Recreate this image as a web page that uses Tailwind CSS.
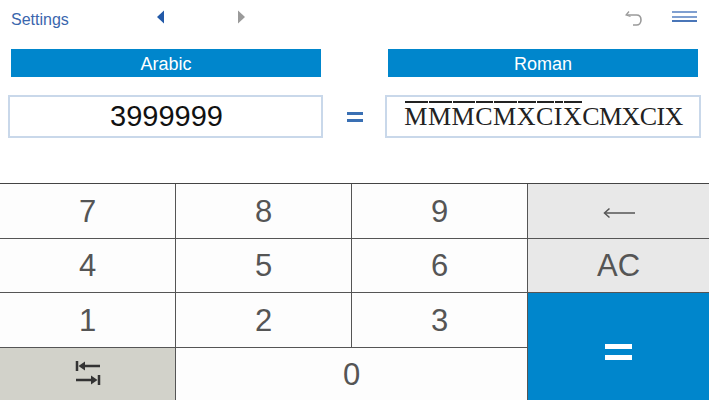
<!DOCTYPE html>
<html lang="en">
<head>
  <meta charset="UTF-8" />
  <title>Roman Numerals</title>
  <script src="https://cdn.jsdelivr.net/npm/@tailwindcss/browser@4"></script>
</head>
<body class="bg-white font-['Liberation_Sans',sans-serif] w-[709px] h-[400px] overflow-hidden flex flex-col">

  <!-- Toolbar -->
  <div class="h-[49px] flex shrink-0 text-[#3a66ad]">
    <div class="w-[156px] pl-[11px] pt-[11px] text-[16px] leading-[17px]">Settings</div>
    <div class="w-[90px] pt-[10px] flex justify-between">
      <svg class="w-[9px] h-[14px]" viewBox="0 0 9 14"><path d="M8 0.5V13.5L1 7Z" fill="#2259a8"/></svg>
      <svg class="w-[9px] h-[14px]" viewBox="0 0 9 14"><path d="M1 0.5V13.5L8 7Z" fill="#9a9a9a"/></svg>
    </div>
    <div class="ml-auto flex pr-[12px] pt-[9px] gap-[27px]">
      <svg class="w-[20px] h-[18px]" viewBox="0 0 20 18" fill="none"><path d="M4 2.500L1 6L5.500 7.500" stroke="#9a9a9a" stroke-width="1.300"/><path d="M2 6H11.500C14.500 6 16 8 16 11C16 14 14 16 11.500 16H8" stroke="#9a9a9a" stroke-width="1.600"/></svg>
      <div class="w-[25px] h-[11px] mt-[2px] flex flex-col justify-between">
        <div class="h-[2px] bg-[#7f9fd0]"></div>
        <div class="h-[2px] bg-[#7f9fd0]"></div>
        <div class="h-[2px] bg-[#4a76b8]"></div>
      </div>
    </div>
  </div>

  <!-- Headings -->
  <div class="flex justify-between px-[11px] h-[28px] shrink-0">
    <div class="w-[310px] bg-[#0086cc] text-white text-[18px] pt-[2px] flex items-center justify-center">Arabic</div>
    <div class="w-[310px] bg-[#0086cc] text-white text-[18px] pt-[2px] flex items-center justify-center">Roman</div>
  </div>

  <!-- Values -->
  <div class="flex justify-between items-center px-[8px] mt-[18px] h-[43px] shrink-0">
    <div class="w-[315px] h-[43px] border-2 border-[#c9d8ea] flex items-center justify-center text-[29px] text-[#111] pl-[2px]">3999999</div>
    <svg class="w-[16px] h-[10px] ml-[1px]" viewBox="0 0 16 10"><path d="M0 0H16V3H0ZM0 7H16V10H0Z" fill="#3a70b4"/></svg>
    <div class="w-[316px] h-[43px] border-2 border-[#c9d8ea] flex items-center justify-center font-['Liberation_Serif',serif] text-[26px] text-[#222] pl-[1px]">
      <span class="tracking-[0.5px] [&>span]:relative [&>span]:before:absolute [&>span]:before:left-[1px] [&>span]:before:right-0 [&>span]:before:-top-[1px] [&>span]:before:h-[2px] [&>span]:before:bg-[#222]"><span>M</span><span>M</span><span>M</span><span>C</span><span>M</span><span>X</span><span>C</span><span>I</span><span>X</span></span><span class="tracking-[-0.6px]">CMXCIX</span>
    </div>
  </div>

  <!-- Keypad -->
  <div class="h-[217px] mt-[45px] grid grid-cols-[176px_176px_176px_181px] grid-rows-[55px_54px_55px_54px] border-t border-[#444] text-[31px] text-[#555] shrink-0">
    <div class="bg-[#fdfdfd] border-r border-b border-[#555] pt-[2px] flex items-center justify-center">7</div>
    <div class="bg-[#fdfdfd] border-r border-b border-[#555] pt-[2px] flex items-center justify-center">8</div>
    <div class="bg-[#fdfdfd] border-r border-b border-[#555] pt-[2px] flex items-center justify-center">9</div>
    <div class="bg-[#e8e8e8] border-b border-[#555] flex items-center justify-center pt-[3px]">
      <svg class="w-[32px] h-[14px]" viewBox="0 0 32 14" fill="none"><path d="M2 7H32" stroke="#555" stroke-width="1.500"/><path d="M6.500 2.500L1.500 7L6.500 11.500" stroke="#555" stroke-width="1.500"/></svg>
    </div>
    <div class="bg-[#fdfdfd] border-r border-b border-[#555] pt-[2px] flex items-center justify-center">4</div>
    <div class="bg-[#fdfdfd] border-r border-b border-[#555] pt-[2px] flex items-center justify-center">5</div>
    <div class="bg-[#fdfdfd] border-r border-b border-[#555] pt-[2px] flex items-center justify-center">6</div>
    <div class="bg-[#e8e8e8] border-b border-[#555] pt-[2px] flex items-center justify-center">AC</div>
    <div class="bg-[#fdfdfd] border-r border-b border-[#555] pt-[2px] flex items-center justify-center">1</div>
    <div class="bg-[#fdfdfd] border-r border-b border-[#555] pt-[2px] flex items-center justify-center">2</div>
    <div class="bg-[#fdfdfd] border-r border-b border-[#555] pt-[2px] flex items-center justify-center">3</div>
    <div class="row-span-2 bg-[#0086cc] flex items-center justify-center pt-[9px]">
      <svg class="w-[27px] h-[16px]" viewBox="0 0 27 16"><path d="M0 0H27V5H0ZM0 11H27V16H0Z" fill="#fff"/></svg>
    </div>
    <div class="bg-[#d2d2ca] border-r border-[#555] flex items-center justify-center pb-[5px]">
      <svg class="w-[26px] h-[26px]" viewBox="0 0 26 26" fill="none"><path d="M2 1V11M8 6H25M24 15V25M1 20H18" stroke="#333" stroke-width="2.500"/><path d="M3.500 6L10 1.500V10.500ZM22.500 20L16 15.500V24.500Z" fill="#333"/></svg>
    </div>
    <div class="col-span-2 bg-[#fdfdfd] border-r border-[#555] flex items-center justify-center">0</div>
  </div>

</body>
</html>
